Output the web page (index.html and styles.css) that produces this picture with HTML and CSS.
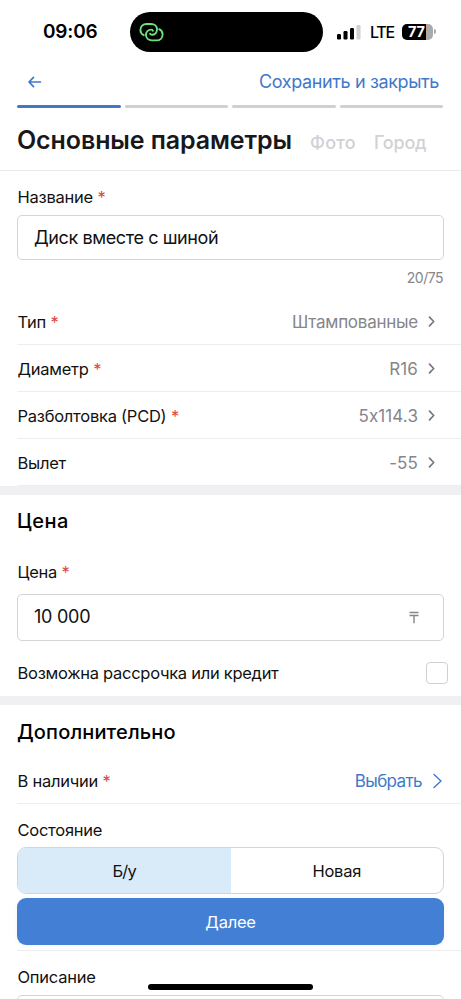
FILE: index.html
```html
<!DOCTYPE html>
<html lang="ru">
<head>
<meta charset="utf-8">
<meta name="viewport" content="width=device-width">
<title>Основные параметры</title>
<link rel="stylesheet" href="styles.css">
</head>
<body>
<div class="screen">
  <div class="status">
    <span class="time">09:06</span>
    <div class="island">
      <svg width="26" height="21" viewBox="0 0 26 21" fill="none" stroke="#6be27c" stroke-width="1.9" stroke-linecap="round"><path d="M4.800 13.200C2.700 12.200 1.400 10.400 1.400 8c0-3.500 2.600-6 6.100-6H12c3.600 0 6 2.300 6 5.300 0 3.200-2.100 5.500-5.200 5.500-1.200 0-1.700-.6-1.700-1.200"/><path d="M20.200 7.200c2.100 1 3.400 2.800 3.400 5.200 0 3.500-2.600 6-6.100 6H13c-3.600 0-6-2.300-6-5.300 0-3.200 2.100-5.500 5.200-5.500 1.200 0 1.700.6 1.700 1.200"/></svg>
    </div>
    <svg class="signal" width="24" height="16" viewBox="0 0 24 16"><rect x="0" y="10" width="4" height="5.5" rx="1.2"/><rect x="6.5" y="7" width="4" height="8.5" rx="1.2"/><rect x="13" y="4" width="4" height="11.5" rx="1.2"/><rect x="19.5" y="1" width="4" height="14.5" rx="1.2" fill="#cfcfcf"/></svg>
    <span class="lte">LTE</span>
    <div class="battery"><span>77</span></div><i class="cap"></i>
  </div>
  <div class="nav">
    <svg width="14" height="12" viewBox="0 0 14 12" fill="none" stroke="#4079ca" stroke-width="1.700" stroke-linecap="round" stroke-linejoin="round"><path d="M12.500 6H1M5.500 1.300 1 6l4.500 4.700"/></svg>
    <span class="save">Сохранить и закрыть</span>
  </div>
  <div class="progress"><i class="on"></i><i></i><i></i><i></i></div>
  <div class="tabs"><h1>Основные параметры</h1><span class="photo">Фото</span><span class="city">Город</span></div>

  <div class="label name"><span>Название</span><b>*</b></div>
  <div class="field title"><span>Диск вместе с шиной</span></div>
  <div class="count">20/75</div>
  <div class="row"><span>Тип</span><b>*</b><em>Штампованные</em><svg class="chev" viewBox="0 0 7 11"><path d="m1.500 1.200 4.200 4.300-4.200 4.300"/></svg></div>
  <div class="row"><span>Диаметр</span><b>*</b><em class="num">R16</em><svg class="chev" viewBox="0 0 7 11"><path d="m1.500 1.200 4.200 4.300-4.200 4.300"/></svg></div>
  <div class="row"><span>Разболтовка (PCD)</span><b>*</b><em class="num">5x114.3</em><svg class="chev" viewBox="0 0 7 11"><path d="m1.500 1.200 4.200 4.300-4.200 4.300"/></svg></div>
  <div class="row"><span>Вылет</span><em class="num">-55</em><svg class="chev" viewBox="0 0 7 11"><path d="m1.500 1.200 4.200 4.300-4.200 4.300"/></svg></div>
  <div class="band"></div>

  <h2 class="price-head">Цена</h2>
  <div class="label price"><span>Цена</span><b>*</b></div>
  <div class="field cost"><span>10 000</span><svg width="10" height="13" viewBox="0 0 10 13" fill="none" stroke="#85858c" stroke-width="1.4"><path d="M.5 1.500h9M.5 4.500h9M5 4.500v7.800"/></svg></div>
  <div class="credit"><span>Возможна рассрочка или кредит</span><i></i></div>
  <div class="band"></div>

  <h2 class="extra-head">Дополнительно</h2>
  <div class="row stock"><span>В наличии</span><b>*</b><em>Выбрать</em><svg width="9" height="16" viewBox="0 0 9 16" fill="none" stroke="#4079ca" stroke-width="1.400" stroke-linecap="round" stroke-linejoin="round"><path d="m1 1.500 7 6.500-7 6.500"/></svg></div>
  <div class="label state"><span>Состояние</span></div>
  <div class="segments"><div class="selected">Б/у</div><div>Новая</div></div>
  <div class="next">Далее</div>
  <div class="rule"></div>
  <div class="label about"><span>Описание</span></div>
  <div class="field area"></div>
  <div class="home"></div>
</div>
</body>
</html>
```
FILE: styles.css
```css
* { box-sizing: border-box; }
body { margin: 0; background: #fff; overflow: hidden; }
.screen {
  position: relative; width: 461px; height: 999px; overflow: hidden;
  display: flex; flex-direction: column;
  font: 400 16.5px/20px Inter, "Noto Sans", sans-serif; color: #111; letter-spacing: -.25px;
}
.screen > * { flex-shrink: 0; }
span, em, h1, h2, .segments, .next { white-space: nowrap; }
i, em { font-style: normal; }
svg { display: block; flex-shrink: 0; }
b { font-weight: 400; color: #dc4a46; margin-left: 4.500px; letter-spacing: 0; }

.status { height: 63px; display: flex; align-items: center; padding-left: 43px; color: #000; }
.time { width: 87px; font-size: 19px; font-weight: 600; letter-spacing: -.2px; }
.island { width: 193px; height: 40px; margin-top: 1px; border-radius: 20px; background: #000; padding: 9.500px 0 0 8.500px; }
.signal { margin-left: 14px; margin-top: 1px; }
.lte { width: 32px; margin-left: 9px; font-size: 16px; font-weight: 500; letter-spacing: -1.300px; margin-top: 1px; }
.battery { width: 31px; height: 16px; border-radius: 5px; background: linear-gradient(90deg, #000 77%, #aaa 77%); color: #fff; font-size: 14.500px; font-weight: 700; line-height: 16px; padding-left: 6px; letter-spacing: -.3px; }
.cap { width: 2px; height: 5px; margin-left: 1px; border-radius: 0 2px 2px 0; background: #aaa; }

.nav { height: 42px; padding: 0 22px 4px 28px; display: flex; align-items: center; justify-content: space-between; color: #4079ca; }
.save { font-size: 18px; letter-spacing: -.38px; }
.progress { height: 3px; display: flex; gap: 4px; padding: 0 18px 0 17px; }
.progress i { flex: 1; background: #d0d0d2; border-radius: 2px; }
.progress .on { background: #4079ca; }
.tabs { height: 63px; border-bottom: 1px solid #eaeaeb; padding: 17px 0 0 17px; display: flex; align-items: baseline; }
h1, h2 { margin: 0; font-weight: 600; }
h1 { width: 293px; font-size: 25px; line-height: 30px; letter-spacing: -.1px; color: #18181a; }
.tabs span { font-size: 18px; font-weight: 500; color: #d1d1d6; letter-spacing: -.2px; }
.tabs .photo { width: 64px; letter-spacing: .2px; }

.label { padding-left: 17.500px; display: flex; }
.name { height: 44px; padding-top: 16px; }
.field { width: 427px; margin-left: 17px; border: 1px solid #d4d4d6; border-radius: 5px; display: flex; align-items: center; justify-content: space-between; padding: 0 24px 0 16px; font-size: 18px; }
.title { height: 45px; letter-spacing: -.4px; padding-top: 1px; }
.count { height: 38px; padding: 8px 18px 0 0; text-align: right; font-size: 14px; letter-spacing: -.5px; color: #85858a; }
.row { height: 47px; margin-left: 17px; border-bottom: 1px solid #ededee; padding: 1px 26px 0 .5px; display: flex; align-items: center; }
.row em { margin-left: auto; color: #85858a; font-size: 17px; }
.row .num { letter-spacing: .1px; }
.chev { width: 7px; height: 11px; margin-left: 9.500px; margin-right: .5px; fill: none; stroke: #77777d; stroke-width: 1.700; stroke-linecap: round; stroke-linejoin: round; }
.band { height: 9px; background: #f0f0f2; }
.price-head, .extra-head { padding-left: 17px; font-size: 20px; line-height: 26px; font-weight: 500; color: #000; letter-spacing: .15px; }
.price-head { height: 67px; padding-top: 13px; letter-spacing: .5px; }
.price { height: 31.500px; }
.cost { height: 47px; }
.credit { height: 55.500px; padding: 9px 13px 0 17.500px; display: flex; align-items: center; justify-content: space-between; letter-spacing: -.28px; }
.credit i { width: 22px; height: 22px; border: 1px solid #d0d0d3; border-radius: 4px; }
.extra-head { height: 53px; padding-top: 14px; }
.stock { height: 46px; padding-right: 19px; }
.stock em { color: #4079ca; letter-spacing: -.6px; }
.stock svg { margin-left: 11px; }
.state { height: 43px; padding-top: 16px; }
.segments { width: 427px; height: 47px; margin-left: 17px; border: 1px solid #d4d4d8; border-radius: 9px; overflow: hidden; display: grid; grid-template-columns: 1fr 1fr; text-align: center; line-height: 46px; }
.segments > :first-child { letter-spacing: -.8px; }
.selected { background: #d9eaf8; }
.next { width: 427px; height: 47px; margin: 4px 0 0 17px; border-radius: 9px; background: #437fd5; color: #fff; text-align: center; line-height: 48px; box-shadow: 0 1px 5px #0000000d; }
.rule { height: 1px; margin: 5px 0 0 17px; background: #eeeeef; }
.about { height: 44px; padding-top: 16px; }
.area { height: 40px; }
.home { position: absolute; left: 148px; top: 984px; width: 165px; height: 6px; border-radius: 3px; background: #000; }
```
